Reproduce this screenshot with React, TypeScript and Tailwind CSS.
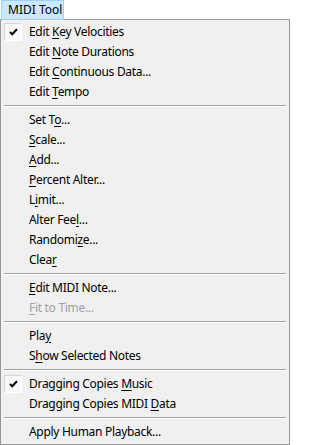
import React from 'react';

type Item =
  | { sep: true }
  | { sep?: false; label: string; key?: number; checked?: boolean; disabled?: boolean };

// key = index of the mnemonic letter that gets an underline
const ITEMS: Item[] = [
  { label: 'Edit Key Velocities', key: 5, checked: true },
  { label: 'Edit Note Durations', key: 5 },
  { label: 'Edit Continuous Data...', key: 5 },
  { label: 'Edit Tempo', key: 5 },
  { sep: true },
  { label: 'Set To...', key: 5 },
  { label: 'Scale...', key: 0 },
  { label: 'Add...', key: 0 },
  { label: 'Percent Alter...', key: 0 },
  { label: 'Limit...', key: 1 },
  { label: 'Alter Feel...', key: 9 },
  { label: 'Randomize...', key: 7 },
  { label: 'Clear', key: 4 },
  { sep: true },
  { label: 'Edit MIDI Note...', key: 0 },
  { label: 'Fit to Time...', key: 0, disabled: true },
  { sep: true },
  { label: 'Play', key: 3 },
  { label: 'Show Selected Notes', key: 1 },
  { sep: true },
  { label: 'Dragging Copies Music', key: 16, checked: true },
  { label: 'Dragging Copies MIDI Data', key: 21 },
  { sep: true },
  { label: 'Apply Human Playback...' },
];

const Label: React.FC<{ text: string; k?: number }> = ({ text, k }) => {
  if (k === undefined) return <span>{text}</span>;
  return (
    <span>
      {text.slice(0, k)}
      <span className="underline underline-offset-[2px]">{text[k]}</span>
      {text.slice(k + 1)}
    </span>
  );
};

const CheckMark = () => (
  <div className="absolute left-0 top-[1px] w-[18px] h-[18px] border border-t-[#d4d4d4] border-l-[#d4d4d4] border-r-white border-b-white bg-[#f8f8f8] flex items-center justify-center">
    <svg width="9" height="8" viewBox="0 0 9 8">
      <path d="M1 4 L3.2 6.2 L8 1.2" fill="none" stroke="#000" strokeWidth="2" />
    </svg>
  </div>
);

const App: React.FC = () => {
  return (
    <div className="w-[290px] h-[445px] bg-white text-[12px] text-black font-['Segoe_UI','Noto_Sans',sans-serif] tracking-[-0.3px] overflow-hidden">
      {/* menu bar title */}
      <div className="h-[19px] flex">
        <div className="ml-[1px] w-[63px] h-[20px] bg-[#cce8ff] border border-[#99d1ff] flex items-center pl-[6px] relative z-10 whitespace-nowrap tracking-normal">
          MIDI Tool
        </div>
      </div>

      {/* dropdown */}
      <div className="h-[426px] border border-[#979797] bg-[#f0f0f0] px-[3px] pt-[2px] flex flex-col">
        {ITEMS.map((it, i) =>
          it.sep ? (
            <div key={i} className="h-[8px] flex flex-col justify-center">
              <div className="h-[1px] bg-[#a0a0a0]" />
              <div className="h-[1px] bg-white" />
            </div>
          ) : (
            <div
              key={i}
              className={`h-[20px] relative flex items-center pl-[25px] whitespace-nowrap ${it.disabled ? 'text-[#a0a0a0]' : ''}`}
            >
              {it.checked && <CheckMark />}
              <Label text={it.label} k={it.key} />
            </div>
          )
        )}
      </div>
    </div>
  );
};

export default App;
